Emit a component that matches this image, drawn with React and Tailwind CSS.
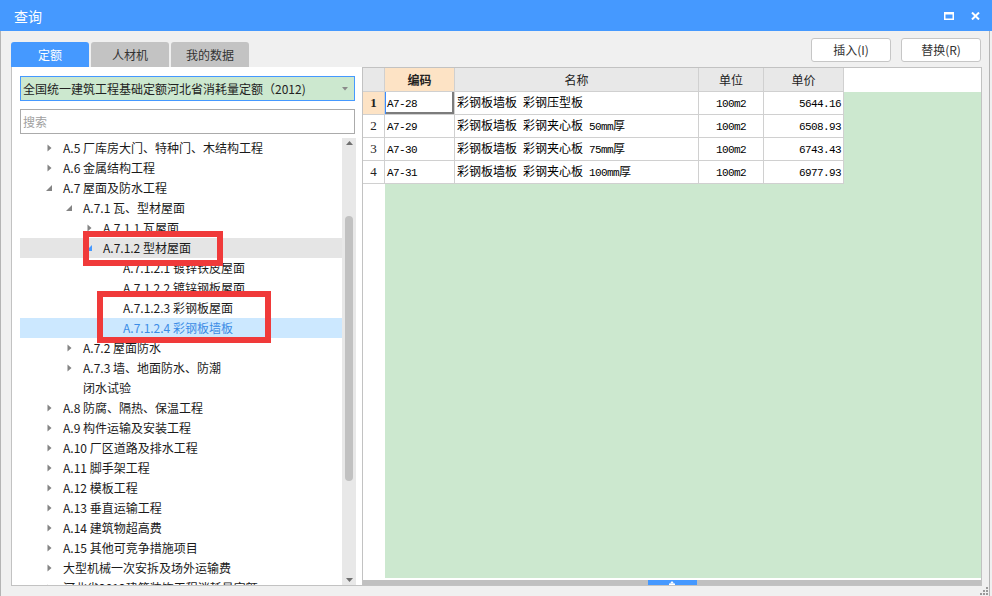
import React from 'react';

const tree = [
  { lvl: 0, arrow: 'c', text: 'A.5 厂库房大门、特种门、木结构工程' },
  { lvl: 0, arrow: 'c', text: 'A.6 金属结构工程' },
  { lvl: 0, arrow: 'e', text: 'A.7 屋面及防水工程' },
  { lvl: 1, arrow: 'e', text: 'A.7.1 瓦、型材屋面' },
  { lvl: 2, arrow: 'c', text: 'A.7.1.1 瓦屋面' },
  { lvl: 2, arrow: 'e', text: 'A.7.1.2 型材屋面', state: 'hover' },
  { lvl: 3, text: 'A.7.1.2.1 镀锌铁皮屋面' },
  { lvl: 3, text: 'A.7.1.2.2 镀锌钢板屋面' },
  { lvl: 3, text: 'A.7.1.2.3 彩钢板屋面' },
  { lvl: 3, text: 'A.7.1.2.4 彩钢板墙板', state: 'selected' },
  { lvl: 1, arrow: 'c', text: 'A.7.2 屋面防水' },
  { lvl: 1, arrow: 'c', text: 'A.7.3 墙、地面防水、防潮', wrap: '闭水试验' },
  { lvl: 0, arrow: 'c', text: 'A.8 防腐、隔热、保温工程' },
  { lvl: 0, arrow: 'c', text: 'A.9 构件运输及安装工程' },
  { lvl: 0, arrow: 'c', text: 'A.10 厂区道路及排水工程' },
  { lvl: 0, arrow: 'c', text: 'A.11 脚手架工程' },
  { lvl: 0, arrow: 'c', text: 'A.12 模板工程' },
  { lvl: 0, arrow: 'c', text: 'A.13 垂直运输工程' },
  { lvl: 0, arrow: 'c', text: 'A.14 建筑物超高费' },
  { lvl: 0, arrow: 'c', text: 'A.15 其他可竞争措施项目' },
  { lvl: 0, arrow: 'c', text: '大型机械一次安拆及场外运输费' },
  { lvl: 0, arrow: 'c', text: '河北省2012建筑装饰工程消耗量定额' },
];

const rows = [
  ['A7-28', '彩钢板墙板 彩钢压型板', '100m2', '5644.16'],
  ['A7-29', '彩钢板墙板 彩钢夹心板 50mm厚', '100m2', '6508.93'],
  ['A7-30', '彩钢板墙板 彩钢夹心板 75mm厚', '100m2', '6743.43'],
  ['A7-31', '彩钢板墙板 彩钢夹心板 100mm厚', '100m2', '6977.93'],
];

// latin parts of the grid use a narrow mono face, like the SimSun cells
const Mixed = ({ text }) => (
  <span className="whitespace-pre">
    {text.split(/([\x20-\x7e]+)/).filter(Boolean).map((part, i) =>
      /^[\x20-\x7e]+$/.test(part) ? (
        <span key={i} className="font-['Liberation_Mono',monospace] text-[11px] tracking-[-0.6px]">{part}</span>
      ) : (
        <span key={i}>{part}</span>
      )
    )}
  </span>
);

const Arrow = ({ kind, color }) => (
  <svg width="17" height="20" viewBox="0 0 17 20" className="shrink-0">
    {kind === 'c' && <polygon points="1.5,6.5 5.5,10 1.5,13.5" fill={color} />}
    {kind === 'e' && <polygon points="6,7 6,13 0,13" fill={color} />}
  </svg>
);

const TreeRow = ({ item }) => {
  const pad = ['pl-[26px]', 'pl-[46px]', 'pl-[66px]', 'pl-[86px]'][item.lvl];
  const bg = item.state === 'hover' ? 'bg-[#e5e5e5]' : item.state === 'selected' ? 'bg-[#cce8ff]' : '';
  const color = item.state === 'selected' ? 'text-[#3b8ce6]' : 'text-[#1a1a1a]';
  return (
    <div className={`flex items-start ${pad} ${bg}`}>
      <Arrow kind={item.arrow} color={item.state === 'hover' ? '#4599ff' : '#848484'} />
      <div className={`text-[12px] leading-[20px] whitespace-pre ${color}`}>
        {item.text}
        {item.wrap && <div>{item.wrap}</div>}
      </div>
    </div>
  );
};

export default function App() {
  return (
    <div className="w-[992px] h-[596px] overflow-hidden bg-[#f0f0f0] font-['Noto_Sans_CJK_SC',sans-serif] flex flex-col">
      {/* title bar */}
      <div className="h-[31px] shrink-0 bg-[#4599ff] flex items-center justify-between pl-[14px] pr-[12px]">
        <span className="text-white text-[14px] leading-none">查询</span>
        <div className="flex items-center gap-[17px]">
          <svg width="10" height="8" viewBox="0 0 10 8">
            <rect x="0.75" y="0.75" width="8.5" height="6.5" fill="none" stroke="#fff" strokeWidth="1.5" />
            <rect x="0" y="0" width="10" height="2.5" fill="#fff" />
          </svg>
          <svg width="9" height="8" viewBox="0 0 9 8">
            <path d="M1 0.5 L8 7.5 M8 0.5 L1 7.5" stroke="#fff" strokeWidth="2" />
          </svg>
        </div>
      </div>

      <div className="flex-1 w-[990px] border-l border-r border-[#b4b4b4] flex flex-col">
        {/* tabs + buttons */}
        <div className="h-[36px] shrink-0 flex justify-between pl-[10px] pr-[7px]">
          <div className="flex items-end gap-[2px]">
            <div className="w-[78px] h-[25px] rounded-t-[3px] bg-[#4599ff] text-white text-[12px] flex items-center justify-center">定额</div>
            <div className="w-[78px] h-[25px] rounded-t-[3px] bg-[#c3c3c3] text-[#333] text-[12px] flex items-center justify-center">人材机</div>
            <div className="w-[78px] h-[25px] rounded-t-[3px] bg-[#c3c3c3] text-[#333] text-[12px] flex items-center justify-center">我的数据</div>
          </div>
          <div className="flex items-start gap-[10px] pt-[7px] pr-[1px]">
            <button className="w-[80px] h-[24px] bg-white border border-[#c6c6c6] rounded-[3px] text-[12px] text-[#333]">插入(I)</button>
            <button className="w-[80px] h-[24px] bg-white border border-[#c6c6c6] rounded-[3px] text-[12px] text-[#333]">替换(R)</button>
          </div>
        </div>

        {/* main */}
        <div className="h-[519px] shrink-0 flex pl-[10px] pr-[7px]">
          {/* left tree panel */}
          <div className="w-[351px] bg-white border-l border-b border-[#c2c2c2] flex flex-col pt-[9px] pl-[8px] pr-[6px]">
            <div className="w-[335px] h-[25px] shrink-0 bg-[#cce8cf] border border-[#4599ff] flex items-center justify-between pl-[2px] pr-[6px]">
              <span className="text-[12px] text-[#222]">全国统一建筑工程基础定额河北省消耗量定额（2012)</span>
              <svg width="6" height="4" viewBox="0 0 6 4"><polygon points="0,0 6,0 3,3.5" fill="#8a8a8a" /></svg>
            </div>
            <div className="w-[335px] h-[25px] shrink-0 mt-[8px] bg-white border border-[#ababab] flex items-center pl-[2px]">
              <span className="text-[12px] text-[#a0a0a0]">搜索</span>
            </div>
            <div className="flex-1 mt-[4px] flex min-h-0">
              <div className="relative flex-1 overflow-hidden">
                {tree.map((item, i) => <TreeRow key={i} item={item} />)}
                {/* red annotation boxes */}
                <div className="absolute left-[63px] top-[93px] w-[140px] h-[35px] border-[6px] border-[#f03a3a]" />
                <div className="absolute left-[77px] top-[153px] w-[174px] h-[52px] border-[6px] border-[#f03a3a]" />
              </div>
              <div className="w-[14px] bg-[#e8e8e8] flex flex-col items-center pt-[3px] pb-[3px]">
                <svg width="7" height="4" viewBox="0 0 7 4"><polygon points="0,4 7,4 3.5,0" fill="#707070" /></svg>
                <div className="w-[8px] h-[265px] mt-[71px] rounded-full bg-[#c1c1c1]" />
                <div className="flex-1" />
                <svg width="7" height="4" viewBox="0 0 7 4"><polygon points="0,0 7,0 3.5,4" fill="#707070" /></svg>
              </div>
            </div>
          </div>

          {/* grid */}
          <div className="w-[620px] bg-white border border-[#c2c2c2] flex flex-col">
            <div className="h-[24px] shrink-0 flex text-[12px] text-[#222]">
              <div className="w-[22px] bg-[#e8e8e8] border-r border-b border-[#d0d0d0]" />
              <div className="w-[70px] bg-[#fde3c5] border-r border-b border-[#d0d0d0] flex items-center justify-center font-bold">编码</div>
              <div className="w-[244px] bg-[#e8e8e8] border-r border-b border-[#d0d0d0] flex items-center justify-center">名称</div>
              <div className="w-[65px] bg-[#e8e8e8] border-r border-b border-[#d0d0d0] flex items-center justify-center">单位</div>
              <div className="w-[80px] bg-[#e8e8e8] border-r border-b border-[#d0d0d0] flex items-center justify-center">单价</div>
              <div className="flex-1 bg-white" />
            </div>
            <div className="flex-1 flex min-h-0">
              <div className="w-[22px] bg-white flex flex-col">
                {rows.map((r, i) => (
                  <div
                    key={i}
                    className={`h-[23px] border-r border-b border-[#d0d0d0] flex items-center justify-center font-['Liberation_Serif',serif] text-[13px] text-[#222] ${i === 0 ? 'bg-[#fde3c5] font-bold' : ''}`}
                  >
                    {i + 1}
                  </div>
                ))}
              </div>
              <div className="flex-1 bg-[#cce8cf]">
                {rows.map((r, i) => (
                  <div key={i} className="w-[459px] h-[23px] flex bg-white text-[12px] text-black">
                    <div className={`w-[70px] border-r border-b border-[#d0d0d0] flex items-center pl-[2px] ${i === 0 ? 'shadow-[inset_1px_0_0_#3b8cff,inset_-2px_-2px_0_#7c7c7c]' : ''}`}>
                      <Mixed text={r[0]} />
                    </div>
                    <div className="w-[244px] border-r border-b border-[#d0d0d0] flex items-center pl-[2px]">
                      <Mixed text={r[1]} />
                    </div>
                    <div className="w-[65px] border-r border-b border-[#d0d0d0] flex items-center justify-center">
                      <Mixed text={r[2]} />
                    </div>
                    <div className="w-[80px] border-r border-b border-[#d0d0d0] flex items-center justify-end pr-[2px]">
                      <Mixed text={r[3]} />
                    </div>
                  </div>
                ))}
              </div>
            </div>
            <div className="h-[2px] shrink-0 bg-white" />
            <div className="h-[5px] shrink-0 bg-[#c0c0c0] flex justify-center">
              <div className="w-[49px] h-[5px] bg-[#4599ff] flex items-center justify-center">
                <svg width="6" height="4" viewBox="0 0 6 4"><polygon points="3,0 5,2.5 1,2.5" fill="#fff" /><rect x="0" y="2.5" width="6" height="1.5" fill="#fff" /></svg>
              </div>
            </div>
          </div>
        </div>

        {/* bottom strip with resize grip */}
        <div className="flex-1 flex justify-end items-end pr-[1px] pb-[1px]">
          <svg width="8" height="8" viewBox="0 0 8 8" fill="#9a9a9a">
            <rect x="6" y="0" width="2" height="2" />
            <rect x="3" y="3" width="2" height="2" />
            <rect x="6" y="3" width="2" height="2" />
            <rect x="0" y="6" width="2" height="2" />
            <rect x="3" y="6" width="2" height="2" />
            <rect x="6" y="6" width="2" height="2" />
          </svg>
        </div>
      </div>
    </div>
  );
}
